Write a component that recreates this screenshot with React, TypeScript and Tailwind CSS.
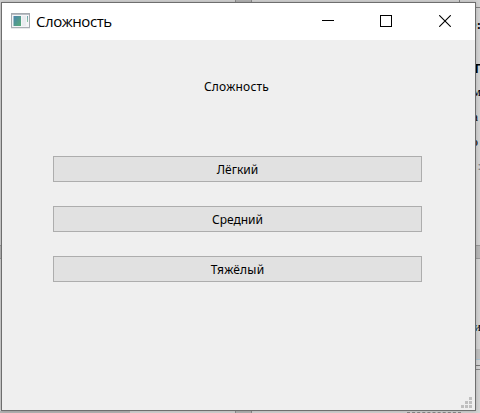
import React from "react";

const levels = [
  { label: "Лёгкий", tracking: "tracking-[0px]" },
  { label: "Средний", tracking: "tracking-[0px]" },
  { label: "Тяжёлый", tracking: "tracking-[0.2px]" },
];

// Line endings of the document behind the window, cut by its right edge.
const fragments = [
  { text: "О:", style: "mt-[16px] mr-[-1px] text-[13px] font-bold" },
  { text: "г", style: "mt-[25px] mr-[-1px] text-[16px] font-bold font-['Liberation_Sans',sans-serif]" },
  { text: "м", style: "mt-[6px] mr-[-1px] text-[13px]" },
  { text: "а", style: "mt-[7px] mr-[2px] text-[13px]" },
  { text: "о", style: "mt-[7px] mr-[2px] text-[13px]" },
  { text: ":", style: "mt-[6px] mr-[-1px] text-[13px] text-[#777]" },
  { text: "и", style: "mt-[143px] mr-[-1px] text-[13px]" },
];

function Desktop() {
  return (
    <div className="col-start-1 row-start-1 grid grid-cols-1 grid-rows-1 overflow-hidden bg-[#d3d3d3] font-['Liberation_Serif',serif] text-black">
      <div className="col-start-1 row-start-1 ml-[235px] w-[17px] border-x border-[#8d8d8d] bg-[#b4b4b4]" />
      <div className="col-start-1 row-start-1 ml-[459px] flex h-[8px] flex-col border-b border-l border-[#808080]" />
      <div className="col-start-1 row-start-1 mt-[245px] h-[14px] border-y border-[#999] bg-[#b7b7b7]" />
      <div className="col-start-1 row-start-1 ml-auto flex w-[4px] flex-col pt-[349px]">
        <div className="h-[10px] bg-[#bfbfbf]" />
        <div className="h-px bg-[#a9c0cf]" />
        <div className="mt-[5px] h-px bg-[#777]" />
        <div className="mt-[3px] h-px bg-[#888]" />
      </div>
      <div className="col-start-1 row-start-1 flex items-end">
        <div className="h-[2px] w-[130px] bg-[#b5b5b5]" />
        <div className="ml-[277px] w-[54px] border-t border-dashed border-[#888]" />
      </div>
      <div className="col-start-1 row-start-1 flex flex-col items-end">
        {fragments.map((f, i) => (
          <span key={i} className={`leading-[18px] ${f.style}`}>
            {f.text}
          </span>
        ))}
      </div>
    </div>
  );
}

function AppIcon() {
  return (
    <svg width="19" height="16" viewBox="0 0 19 16" className="-mt-px shrink-0">
      <defs>
        <linearGradient id="screen" x1="0" y1="0" x2="1" y2="1">
          <stop offset="0" stopColor="#4b83ad" />
          <stop offset="1" stopColor="#57ad76" />
        </linearGradient>
        <linearGradient id="meter" x1="0" y1="0" x2="0" y2="1">
          <stop offset="0" stopColor="#6f9fb0" />
          <stop offset="1" stopColor="#8cc9a0" />
        </linearGradient>
      </defs>
      <rect x="0.5" y="0.5" width="18" height="14" fill="#f4f5f7" stroke="#a4a9af" />
      <path d="M1 1.5H18" stroke="#b9bec5" />
      <rect x="2.5" y="3" width="7.5" height="10" fill="url(#screen)" />
      <rect x="11" y="3" width="4" height="10" fill="#e9ecef" />
      <rect x="16" y="3" width="1" height="6" fill="url(#meter)" />
      <path d="M0 15.2H19" stroke="#c9ccd0" strokeWidth="0.6" />
    </svg>
  );
}

function TitleBar() {
  return (
    <header className="flex h-[37px] shrink-0 items-center bg-white pl-[9px]">
      <AppIcon />
      <h1 className="-mt-px ml-[6px] flex-1 whitespace-nowrap font-['Open_Sans',sans-serif] text-[15px] leading-5 tracking-[-0.45px] text-black">
        Сложность
      </h1>
      <div className="-mt-px flex items-center pr-[24px]">
        <svg width="12" height="12" viewBox="0 0 12 12" className="mr-[46px]" shapeRendering="crispEdges">
          <path d="M0 5.5H12" stroke="#000" />
        </svg>
        <svg width="12" height="12" viewBox="0 0 12 12" className="mr-[47px]" shapeRendering="crispEdges">
          <rect x="0.5" y="0.5" width="11" height="11" fill="none" stroke="#000" />
        </svg>
        <svg width="12" height="12" viewBox="0 0 12 12">
          <path d="M0.2 0.2L11.8 11.8M11.8 0.2L0.2 11.8" stroke="#000" strokeWidth="1.1" />
        </svg>
      </div>
    </header>
  );
}

function SizeGrip() {
  return (
    <div className="ml-auto mt-auto grid grid-cols-3 gap-px pb-[2px] pr-[3px]">
      {[0, 0, 1, 0, 1, 1, 1, 1, 1].map((on, i) => (
        <span key={i} className={on ? "size-[3px] bg-[#bfbfbf]" : "size-[3px]"} />
      ))}
    </div>
  );
}

export default function App() {
  return (
    <div className="grid h-[413px] w-[480px] grid-cols-1 grid-rows-1 overflow-hidden">
      <Desktop />
      <div className="z-10 col-start-1 row-start-1 ml-px mt-[2px] flex h-[409px] w-[475px] flex-col border border-[#6e6e6e] bg-[#efefef] shadow-[0_0_4px_rgba(0,0,0,0.2)]">
        <TitleBar />
        <main className="flex flex-1 flex-col pt-[39px] font-['Noto_Sans',sans-serif] text-[12px] text-black">
          <div className="flex flex-col pl-[51px] pr-[53px]">
            <p className="pr-[2px] text-center leading-4 tracking-[0.2px]">Сложность</p>
            <div className="flex flex-col gap-6 pt-[61px]">
              {levels.map((l) => (
                <button
                  key={l.label}
                  className={`h-[26px] border border-[#adadad] bg-[#e1e1e1] pt-[2px] leading-4 ${l.tracking}`}
                >
                  {l.label}
                </button>
              ))}
            </div>
          </div>
          <SizeGrip />
        </main>
      </div>
    </div>
  );
}
